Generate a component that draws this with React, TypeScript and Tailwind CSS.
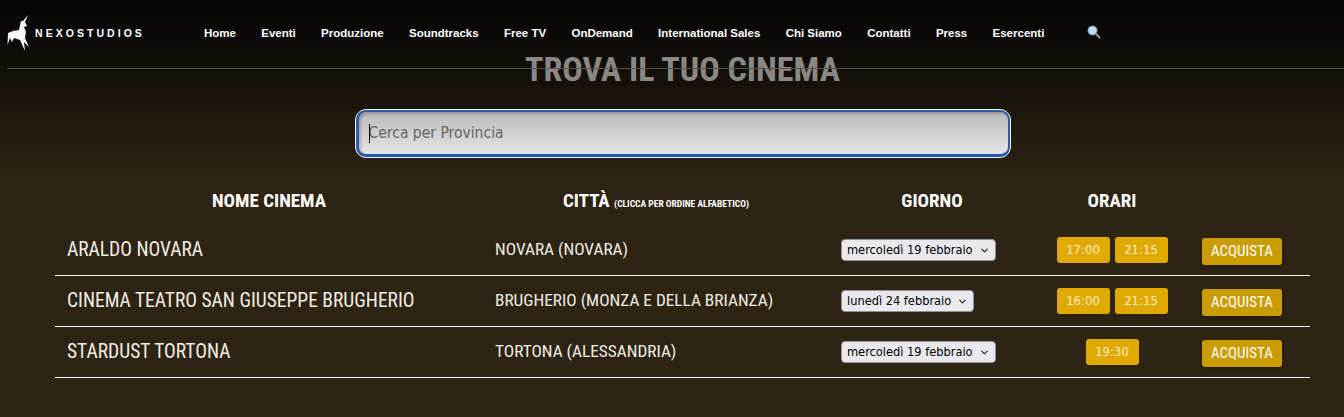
import { ChevronDown } from 'lucide-react'

const menu = ['Home', 'Eventi', 'Produzione', 'Soundtracks', 'Free TV', 'OnDemand', 'International Sales', 'Chi Siamo', 'Contatti', 'Press', 'Esercenti']

const rows = [
    { name: 'ARALDO NOVARA', city: 'NOVARA (NOVARA)', day: 'mercoledì 19 febbraio', times: ['17:00', '21:15'], w: 'w-[155px]' },
    { name: 'CINEMA TEATRO SAN GIUSEPPE BRUGHERIO', city: 'BRUGHERIO (MONZA E DELLA BRIANZA)', day: 'lunedì 24 febbraio', times: ['16:00', '21:15'], w: 'w-[133px]' },
    { name: 'STARDUST TORTONA', city: 'TORTONA (ALESSANDRIA)', day: 'mercoledì 19 febbraio', times: ['19:30'], w: 'w-[155px]' },
]

const cols = 'grid grid-cols-[428px_346px_206px_154px_121px]'
const condensed = "font-['DejaVu_Sans',sans-serif] [font-stretch:condensed]"

function Logo() {
    return (
        <svg width="30" height="40" viewBox="0 0 30 40" className="shrink-0">
            <path fill="#f6f6f6" d="M22 1 L17 7 L15 7 L13 16 L7 17 L2 19 L1.5 31 L4 24 L6 28 L8 24 L14 26 L19 37 L18 28 L23 33 L19 24 L20 18 L18 13 L21 12 L19 8 Z" />
        </svg>
    )
}

function SearchIcon() {
    return (
        <svg width="14" height="14" viewBox="0 0 14 14" className="shrink-0">
            <path d="M8.5 8.5 L13 13" stroke="#8f9a94" strokeWidth="2" />
            <circle cx="5.5" cy="5.5" r="4.6" fill="#bcd8f4" stroke="#6d8fb0" strokeWidth="0.8" />
        </svg>
    )
}

function Header() {
    return (
        <header className="absolute top-0 left-[7px] right-0 h-[69px] border-b border-[#57544a] flex items-start">
            <div className="flex items-start mt-[14px] ml-[-1px]">
                <Logo />
                <span className="ml-[-1px] mt-[13px] text-[10.5px] leading-[13px] font-bold tracking-[0.29em] text-white font-['Liberation_Sans',sans-serif] [font-stretch:100%]">NEXOSTUDIOS</span>
            </div>
            <nav className="absolute left-[197px] top-[25px] flex gap-[25.3px] text-[11.5px] font-bold text-white font-['Liberation_Sans',sans-serif] [font-stretch:100%]">
                {menu.map((m) => <a key={m}>{m}</a>)}
            </nav>
            <div className="absolute left-[1080px] top-[25px]"><SearchIcon /></div>
        </header>
    )
}

export default function App() {
    return (
        <div className="relative h-[417px] overflow-hidden bg-gradient-to-b from-[#050505] to-[#2e2413] to-[44%] font-['Roboto',sans-serif] [font-stretch:85%]">
            <Header />
            <main className="pt-[49px] pl-[21px] flex flex-col items-center">
                <h1 className="text-[34px] leading-[40px] font-bold text-[#8a8885]">TROVA IL TUO CINEMA</h1>
                <div className="relative mt-[21px] w-[654px] h-[47px] rounded-[10px] border-2 border-l-[3px] border-[#2c5cab] border-b-[3px] border-b-[#1f5bb8] outline outline-1 outline-white bg-gradient-to-b from-[#bbbbbb] to-[#e4e4e4] shadow-[inset_2px_2px_3px_rgba(0,0,0,0.2)] flex items-center pl-[10px]">
                    <input placeholder="Cerca per Provincia" className={`w-full pt-[2px] bg-transparent outline-none text-[15.5px] text-black placeholder:text-[#666] ${condensed}`} />
                    <span className="absolute left-[10px] top-[12px] w-px h-[19px] bg-black" />
                </div>
                <div className="mt-[28px] w-[1255px] text-white">
                    <div className={`${cols} h-[40px] pb-[8px] items-center text-[19px] font-bold`}>
                        <div className="text-center">NOME CINEMA</div>
                        <div className="text-center">CITTÀ <span className="text-[9.5px]">(CLICCA PER ORDINE ALFABETICO)</span></div>
                        <div className="text-center">GIORNO</div>
                        <div className="text-center">ORARI</div>
                        <div />
                    </div>
                    {rows.map((r) => (
                        <div key={r.name} className={`${cols} h-[51px] items-center border-b border-white text-[#f0ece4]`}>
                            <div className="pl-[12px] text-[19.5px] mt-[-1px]">{r.name}</div>
                            <div className="pl-[12px] text-[17.3px] mt-[-1px]">{r.city}</div>
                            <div className="pl-[12px]">
                                <div className={`relative h-[22px] ${r.w}`}>
                                    <select defaultValue={r.day} className={`block appearance-none w-full h-full rounded-[4px] border border-[#8f8f9d] bg-[#e9e9ed] text-black text-[12.7px] pl-[5px] ${condensed}`}>
                                        <option>{r.day}</option>
                                    </select>
                                    <ChevronDown size={11} strokeWidth={2.5} className="absolute right-[6px] top-[6px] text-[#222] pointer-events-none" />
                                </div>
                            </div>
                            <div className="flex justify-center gap-[5px]">
                                {r.times.map((t) => (
                                    <button key={t} className={`w-[53px] h-[26px] rounded-[3px] bg-[#dfa900] text-[#f9edc0] text-[13px] ${condensed}`}>{t}</button>
                                ))}
                            </div>
                            <div className="pl-[13px] mt-[3px]">
                                <button className="w-[80px] h-[27px] rounded-[3px] bg-[#c99c00] text-white text-[15px] shadow-[0_2px_4px_rgba(0,0,0,0.3)]">ACQUISTA</button>
                            </div>
                        </div>
                    ))}
                </div>
            </main>
        </div>
    )
}
